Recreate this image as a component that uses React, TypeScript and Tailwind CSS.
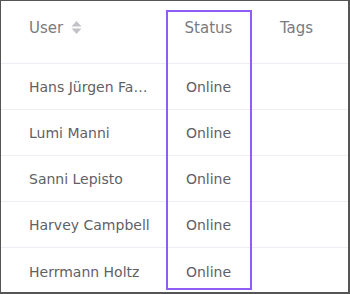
import React from 'react';

const users = ['Hans Jürgen Faber', 'Lumi Manni', 'Sanni Lepisto', 'Harvey Campbell', 'Herrmann Holtz'];

function SortIcon() {
  return (
    <svg width="11" height="15" viewBox="0 0 11 15" className="ml-[8px] mt-[3px]">
      <path d="M5.5 1 L10.5 6.5 H0.5 Z" fill="#c2c2c8" />
      <path d="M5.5 14 L10.5 8.5 H0.5 Z" fill="#c2c2c8" />
    </svg>
  );
}

export default function App() {
  return (
    <div
      className="relative w-[350px] h-[294px] overflow-hidden bg-white border-t border-l border-r-2 border-b-2 border-[#555]"
      style={{ fontFamily: '"DejaVu Sans", sans-serif' }}
    >
      {/* Header */}
      <div className="flex h-[63px] border-b border-[#eceef4] text-[15px] text-[#7a7a80]">
        <div className="w-[165px] pl-[28px] pt-[16px] flex items-start">
          <span className="leading-[22px]">User</span>
          <SortIcon />
        </div>
        <div className="w-[85px] pt-[16px] text-center leading-[22px]">Status</div>
        <div className="flex-1 pt-[16px] text-center leading-[22px] pr-[6px]">Tags</div>
      </div>

      {/* Rows */}
      {users.map((name, i) => (
        <div
          key={name}
          className={`flex h-[46px] items-center pt-[2px] text-[14px] text-[#5f5f66] ${i < users.length - 1 ? 'border-b border-[#eceef4]' : ''}`}
        >
          <div className="w-[165px] pl-[28px] pr-[10px] truncate">{name}</div>
          <div className="w-[85px] text-center">Online</div>
          <div className="flex-1" />
        </div>
      ))}

      {/* Column highlight */}
      <div className="absolute left-[165px] top-[9px] w-[86px] h-[280px] border-2 border-[#8f5cf6] pointer-events-none" />
    </div>
  );
}
